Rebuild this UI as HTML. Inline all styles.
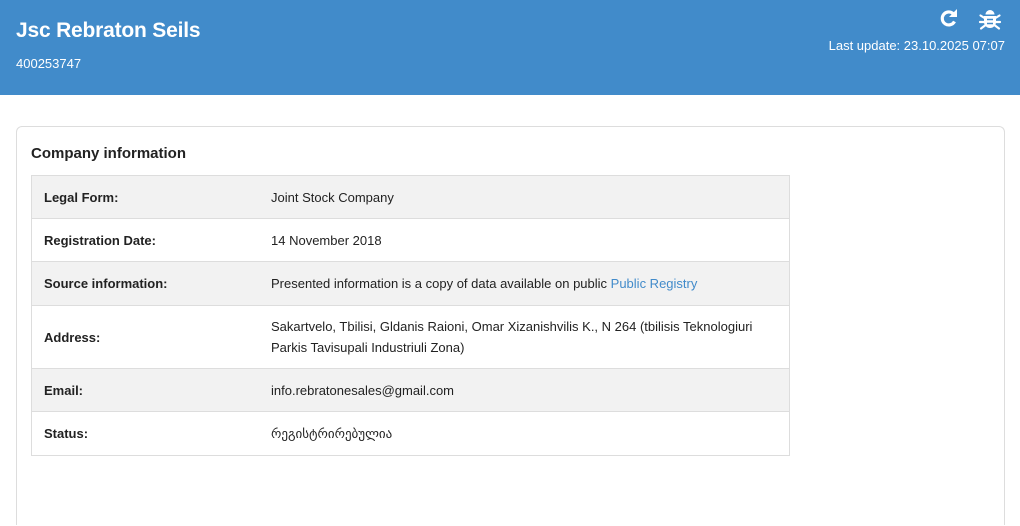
<!DOCTYPE html>
<html><head><meta charset="utf-8"><style>
html,body{margin:0;width:1020px;height:526px;overflow:hidden;background:#fff;font-family:"Liberation Sans","DejaVu Sans",sans-serif;color:#222}
.hd{position:absolute;left:0;top:0;width:1020px;height:95px;background:#418bca;color:#fff}
.t{position:absolute;left:16px;top:19px;font-size:21px;font-weight:bold;letter-spacing:-0.2px}
.id{position:absolute;left:16px;top:56px;font-size:13px}
.lu{position:absolute;right:15px;top:38px;font-size:13px}
.card{position:absolute;left:16px;top:126px;width:987px;height:398px;border:1px solid #ddd;border-bottom:none;border-radius:6px 6px 0 0}
.ct{position:absolute;left:31px;top:145px;font-size:15px;font-weight:bold}
table{position:absolute;left:31px;top:175px;width:759px;border-collapse:collapse;border:1px solid #ddd;font-size:13px}
td{border-top:1px solid #ddd;padding:0 12px;vertical-align:middle;line-height:21px}
td:first-child{font-weight:bold;width:203px}
tr:nth-child(odd){background:#f2f2f2}
a{color:#428bca;text-decoration:none}
</style></head><body>
<div class="hd">
<div class="t">Jsc Rebraton Seils</div>
<div class="id">400253747</div>
<svg style="position:absolute;left:938px;top:8px" width="22" height="22" viewBox="0 0 22 22"><path d="M16.5 13.5A6.5 6.5 0 1 1 15 5.5" fill="none" stroke="#fff" stroke-width="3.2"/><path d="M11 9h8V1z" fill="#fff"/></svg>
<svg style="position:absolute;left:978px;top:7px" width="24" height="24" viewBox="0 0 24 24" fill="#fff"><path d="M7.5 7.5a4.5 4.5 0 0 1 9 0z"/><path d="M6 9h12v6a6 6 0 0 1-12 0z"/><path d="M2.5 8.5l4 2.5M21.5 8.5l-4 2.5M2 15h4M22 15h-4M3 21.5l4-3M21 21.5l-4-3" stroke="#fff" stroke-width="2.2" stroke-linecap="round"/><path d="M9 12.5h6M9 16.5h6" stroke="#418bca" stroke-width="1.6"/></svg>
<div class="lu">Last update: 23.10.2025 07:07</div>
</div>
<div class="card"></div>
<div class="ct">Company information</div>
<table>
<tr style="height:43px"><td>Legal Form:</td><td>Joint Stock Company</td></tr>
<tr style="height:43px"><td>Registration Date:</td><td>14 November 2018</td></tr>
<tr style="height:44px"><td>Source information:</td><td>Presented information is a copy of data available on public <a>Public Registry</a></td></tr>
<tr style="height:63px"><td>Address:</td><td>Sakartvelo, Tbilisi, Gldanis Raioni, Omar Xizanishvilis K., N 264 (tbilisis Teknologiuri Parkis Tavisupali Industriuli Zona)</td></tr>
<tr style="height:43px"><td>Email:</td><td>info.rebratonesales@gmail.com</td></tr>
<tr style="height:44px"><td>Status:</td><td>რეგისტრირებულია</td></tr>
</table>
</body></html>
